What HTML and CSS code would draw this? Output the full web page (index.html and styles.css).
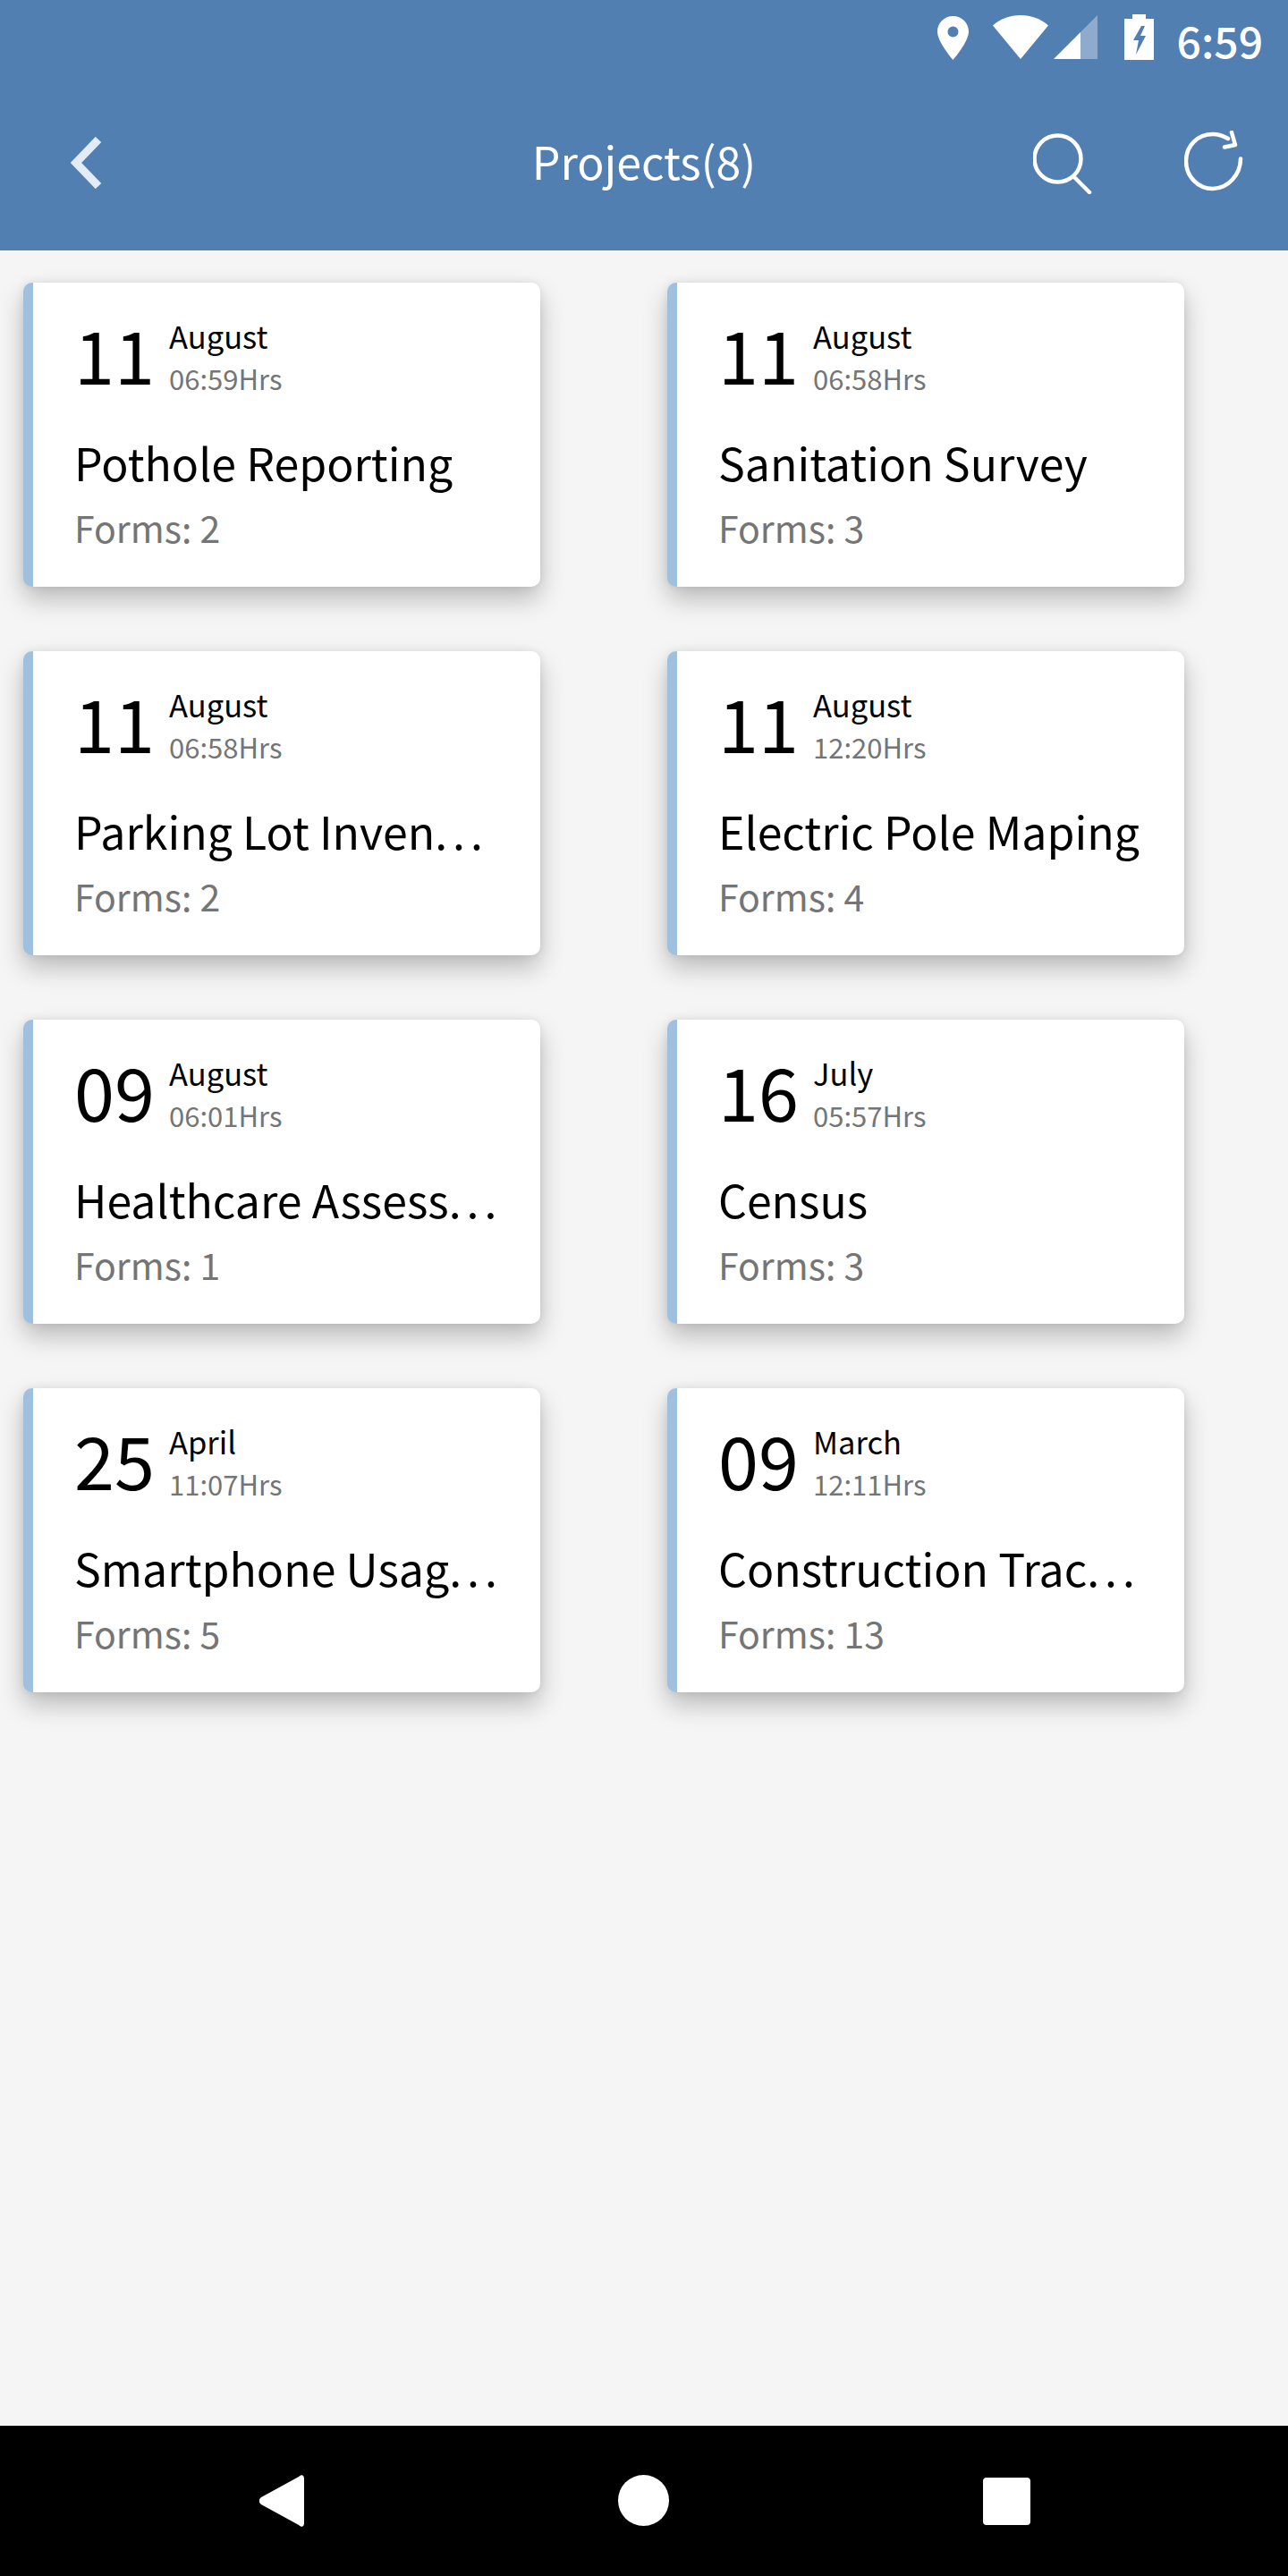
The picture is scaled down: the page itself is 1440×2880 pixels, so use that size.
FILE: index.html
```html
<!DOCTYPE html>
<html lang="en">
<head>
    <meta charset="UTF-8">
    <meta name="viewport" content="width=device-width, initial-scale=1.0">
    <title>Projects</title>
    <link rel="stylesheet" href="styles.css">
</head>
<body>
    <header class="app-header">
        <!-- Status bar -->
        <div class="status-bar">
            <svg class="icon-pin" width="35" height="49" viewBox="0 0 35 49">
                <path fill-rule="evenodd" fill="#fff" d="M17.5 0C7.8 0 0 7.7 0 17.3 0 29 17.5 49 17.5 49S35 29 35 17.3C35 7.7 27.2 0 17.5 0zm0 23.5a6 6 0 1 1 0-12 6 6 0 0 1 0 12z"/>
            </svg>
            <svg class="icon-wifi" width="62" height="49" viewBox="0 0 62 49">
                <path fill="#fff" d="M31 0C19 0 8.500 4 0 11.500L31 49 62 11.500C53.500 4 43 0 31 0z"/>
            </svg>
            <svg class="icon-signal" width="49" height="49" viewBox="0 0 49 49">
                <path fill="#fff" fill-opacity="0.35" d="M49 0V49H30V19z"/>
                <path fill="#fff" d="M30 19V49H0z"/>
            </svg>
            <svg class="icon-battery" width="33" height="51" viewBox="0 0 33 51">
                <path fill-rule="evenodd" fill="#fff" d="M9 0H24V5H33V51H0V5H9zM19 13L10 29H16L13 45 24 24H18L23 13z"/>
            </svg>
            <span class="status-time">6:59</span>
        </div>
        <!-- Toolbar -->
        <div class="toolbar">
            <button class="back-button" aria-label="back">
                <svg width="36" height="58" viewBox="0 0 36 58">
                    <path fill="none" stroke="#e3ebf5" stroke-width="9" d="M31 3L6 29 31 55"/>
                </svg>
            </button>
            <h1 class="toolbar-title">Projects(8)</h1>
            <div class="toolbar-actions">
                <button class="search-button" aria-label="search">
                    <svg width="66" height="68" viewBox="0 0 66 68">
                        <circle cx="27.500" cy="28.500" r="26" fill="none" stroke="#fff" stroke-width="4.500"/>
                        <path fill="none" stroke="#fff" stroke-width="4.500" stroke-linecap="round" d="M45 48L63 66"/>
                    </svg>
                </button>
                <button class="refresh-button" aria-label="refresh">
                    <svg width="66" height="68" viewBox="0 0 66 68">
                        <path fill="none" stroke="#fff" stroke-width="4.500" stroke-linecap="round" stroke-linejoin="round" d="M63 31.500C63 49 49 65 32 65 15 65 2 51 2 34 2 17 15 4 32 4 38 4 43 5.500 49 9M45 18.500L57 16 53 2"/>
                    </svg>
                </button>
            </div>
        </div>
    </header>

    <main class="project-grid">
        <div class="card">
            <div class="card-date">
                <span class="day">11</span>
                <div class="date-info"><span class="month">August</span><span class="time">06:59Hrs</span></div>
            </div>
            <div class="project-name">Pothole Reporting</div>
            <div class="forms">Forms: 2</div>
        </div>
        <div class="card">
            <div class="card-date">
                <span class="day">11</span>
                <div class="date-info"><span class="month">August</span><span class="time">06:58Hrs</span></div>
            </div>
            <div class="project-name">Sanitation Survey</div>
            <div class="forms">Forms: 3</div>
        </div>
        <div class="card">
            <div class="card-date">
                <span class="day">11</span>
                <div class="date-info"><span class="month">August</span><span class="time">06:58Hrs</span></div>
            </div>
            <div class="project-name">Parking Lot Inven<span class="dots">...</span></div>
            <div class="forms">Forms: 2</div>
        </div>
        <div class="card">
            <div class="card-date">
                <span class="day">11</span>
                <div class="date-info"><span class="month">August</span><span class="time">12:20Hrs</span></div>
            </div>
            <div class="project-name">Electric Pole Maping</div>
            <div class="forms">Forms: 4</div>
        </div>
        <div class="card">
            <div class="card-date">
                <span class="day">09</span>
                <div class="date-info"><span class="month">August</span><span class="time">06:01Hrs</span></div>
            </div>
            <div class="project-name">Healthcare Assess<span class="dots">...</span></div>
            <div class="forms">Forms: 1</div>
        </div>
        <div class="card">
            <div class="card-date">
                <span class="day">16</span>
                <div class="date-info"><span class="month">July</span><span class="time">05:57Hrs</span></div>
            </div>
            <div class="project-name">Census</div>
            <div class="forms">Forms: 3</div>
        </div>
        <div class="card">
            <div class="card-date">
                <span class="day">25</span>
                <div class="date-info"><span class="month">April</span><span class="time">11:07Hrs</span></div>
            </div>
            <div class="project-name">Smartphone Usag<span class="dots">...</span></div>
            <div class="forms">Forms: 5</div>
        </div>
        <div class="card">
            <div class="card-date">
                <span class="day">09</span>
                <div class="date-info"><span class="month">March</span><span class="time">12:11Hrs</span></div>
            </div>
            <div class="project-name">Construction Trac<span class="dots">...</span></div>
            <div class="forms">Forms: 13</div>
        </div>
    </main>

    <!-- Android nav bar -->
    <footer class="nav-bar">
        <svg class="nav-back" width="50" height="58" viewBox="0 0 50 58">
            <path fill="#fff" d="M50 4V54C50 58 47 59 44 56L2 33C-1 31-1 27 2 25L44 2C47-1 50 0 50 4z"/>
        </svg>
        <span class="nav-home"></span>
        <span class="nav-recent"></span>
    </footer>
</body>
</html>
```

FILE: styles.css
```css
* {
    box-sizing: border-box;
}

body {
    font-family: "Noto Sans CJK JP", "Noto Sans", sans-serif;
    background: #f5f5f5;
    color: #000;
    margin: 0;
    height: 2880px;
    display: flex;
    flex-direction: column;
    overflow: hidden;
}

button {
    background: transparent;
    border: none;
    padding: 0;
    display: flex;
}

.app-header {
    background: #527fb2;
    height: 280px;
    color: #fff;
}

.status-bar {
    height: 84px;
    padding: 16px 28px 0 0;
    display: flex;
    justify-content: flex-end;
    align-items: flex-start;
}

.icon-pin {
    margin-top: 2px;
    margin-right: 27px;
}

.icon-wifi {
    margin-top: 1px;
    margin-right: 6px;
}

.icon-signal {
    margin-top: 1px;
    margin-right: 30px;
}

.icon-battery {
    margin-right: 26px;
}

.status-time {
    font-size: 48px;
    font-weight: 500;
    line-height: 56px;
}

.toolbar {
    height: 196px;
    padding: 0 50px;
    display: grid;
    grid-template-columns: 1fr auto 1fr;
    align-items: start;
}

.back-button {
    margin: 69px 0 0 29px;
}

.toolbar-title {
    margin: 55px 0 0 0;
    font-size: 50px;
    font-weight: 400;
    line-height: 80px;
}

.toolbar-actions {
    display: flex;
    justify-content: flex-end;
    align-items: flex-start;
}

.search-button {
    margin-top: 65px;
    margin-right: 103px;
}

.refresh-button {
    margin-top: 62px;
}

.project-grid {
    flex: 1;
    padding: 36px 0 0 26px;
    display: grid;
    grid-template-columns: repeat(2, 578px);
    grid-auto-rows: 340px;
    column-gap: 142px;
    row-gap: 72px;
    align-content: start;
}

.card {
    background: #fff;
    border-left: 11px solid #9fc0df;
    border-radius: 10px;
    padding: 33px 30px 0 46px;
    box-shadow: 0 14px 28px rgba(0, 0, 0, 0.24), 0 0 10px rgba(0, 0, 0, 0.08);
    min-width: 0;
}

.card-date {
    display: flex;
    align-items: flex-start;
    height: 92px;
}

.day {
    font-size: 81px;
    line-height: 92px;
    width: 106px;
}

.date-info {
    display: flex;
    flex-direction: column;
    padding-top: 2px;
}

.month {
    font-size: 34.500px;
    line-height: 48px;
}

.time {
    font-size: 31px;
    line-height: 47px;
    color: #757575;
}

.project-name {
    margin-top: 37px;
    font-size: 50px;
    line-height: 76px;
    white-space: nowrap;
}

.dots {
    letter-spacing: 6px;
}

.forms {
    font-size: 41px;
    line-height: 64px;
    margin-top: 3px;
    color: #757575;
}

.nav-bar {
    height: 168px;
    background: #000;
    padding: 55px 0 0 290px;
    display: flex;
    align-items: flex-start;
}

.nav-home {
    width: 57px;
    height: 57px;
    margin-left: 351px;
    background: #fff;
    border-radius: 50%;
}

.nav-recent {
    width: 53px;
    height: 53px;
    margin: 3px 0 0 351px;
    background: #fff;
    border-radius: 4px;
}
```
